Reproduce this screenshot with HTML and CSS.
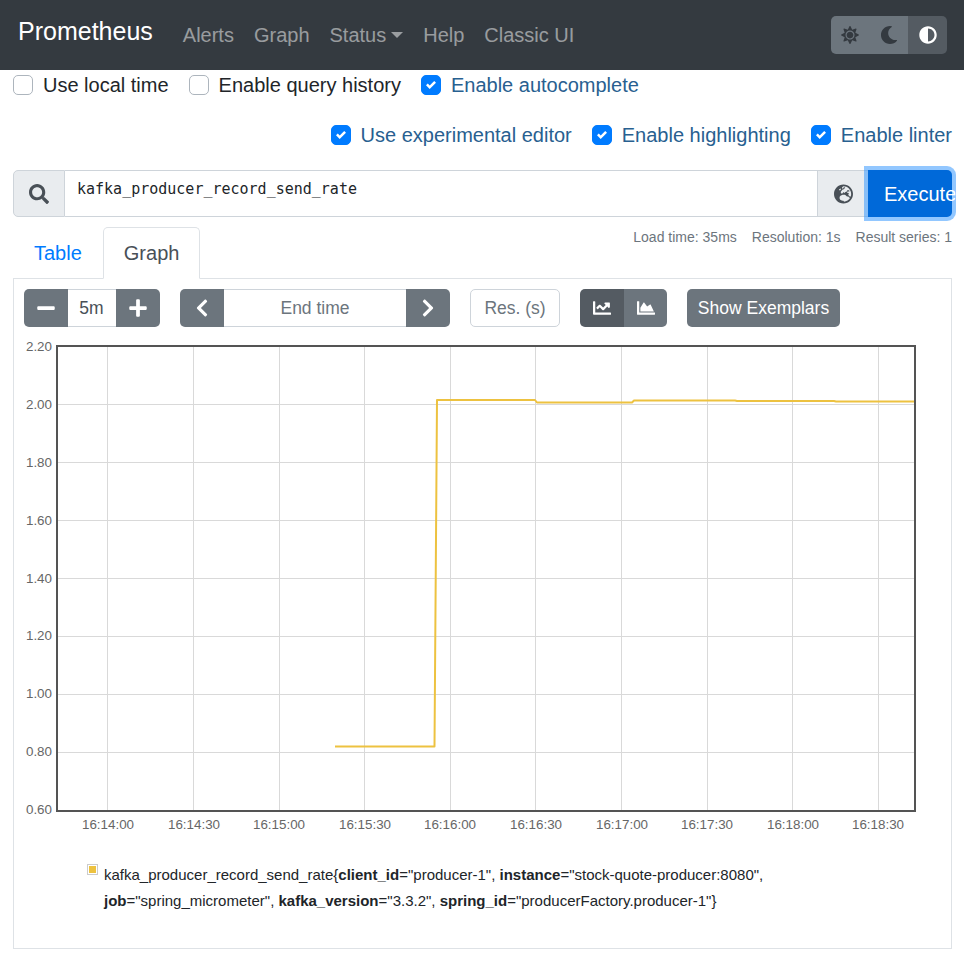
FILE: index.html
```html
<!DOCTYPE html>
<html lang="en">
<head>
<meta charset="utf-8">
<title>Prometheus Time Series Collection and Processing Server</title>
<link rel="stylesheet" href="styles.css">
</head>
<body>
<nav class="navbar">
  <a class="brand">Prometheus</a>
  <ul class="nav-links">
    <li class="nav-link">Alerts</li>
    <li class="nav-link">Graph</li>
    <li class="nav-link">Status<span class="caret"></span></li>
    <li class="nav-link">Help</li>
    <li class="nav-link">Classic UI</li>
  </ul>
  <div class="theme-group">
    <button class="theme-btn"><svg class="icon-theme" viewBox="0 0 512 512"><path d="M256 160c-52.9 0-96 43.1-96 96s43.1 96 96 96 96-43.1 96-96-43.1-96-96-96zm246.4 80.5l-94.7-47.3 33.5-100.4c4.5-13.6-8.4-26.5-21.9-21.9l-100.4 33.5-47.4-94.8c-6.4-12.8-24.6-12.8-31 0l-47.3 94.7L92.7 70.8c-13.6-4.5-26.5 8.4-21.9 21.9l33.5 100.4-94.7 47.4c-12.8 6.4-12.8 24.6 0 31l94.7 47.3-33.5 100.5c-4.5 13.6 8.4 26.5 21.9 21.9l100.4-33.5 47.3 94.7c6.4 12.8 24.6 12.8 31 0l47.3-94.7 100.4 33.5c13.6 4.5 26.5-8.4 21.9-21.9l-33.5-100.4 94.7-47.3c13-6.5 13-24.7.2-31.1zm-155.9 106c-49.9 49.9-131.1 49.9-181 0-49.9-49.9-49.9-131.1 0-181 49.9-49.9 131.1-49.9 181 0 49.9 49.9 49.9 131.1 0 181z"/></svg></button>
    <button class="theme-btn"><svg class="icon-theme" viewBox="0 0 512 512"><path d="M283.211 512c78.962 0 151.079-35.925 198.857-94.792 7.068-8.708-.639-21.43-11.562-19.35-124.203 23.654-238.262-71.576-238.262-196.954 0-72.222 38.662-138.635 101.498-174.394 9.686-5.512 7.25-20.197-3.756-22.23A258.156 258.156 0 0 0 283.211 0c-141.309 0-256 114.511-256 256 0 141.309 114.511 256 256 256z"/></svg></button>
    <button class="theme-btn theme-active"><svg class="icon-theme" viewBox="0 0 512 512"><path d="M8 256c0 136.966 111.033 248 248 248s248-111.034 248-248S392.966 8 256 8 8 119.033 8 256zm248 184V72c101.705 0 184 82.311 184 184 0 101.705-82.311 184-184 184z"/></svg></button>
  </div>
</nav>

<main class="container">
  <div class="options-row">
    <label class="check"><span class="box"></span>Use local time</label>
    <label class="check"><span class="box"></span>Enable query history</label>
    <label class="check checked"><span class="box"><svg viewBox="0 0 8 8"><path d="M6.564.75l-3.59 3.612-1.538-1.55L0 4.26l2.974 2.99L8 2.193z"/></svg></span>Enable autocomplete</label>
  </div>
  <div class="options-row options-right">
    <label class="check checked"><span class="box"><svg viewBox="0 0 8 8"><path d="M6.564.75l-3.59 3.612-1.538-1.55L0 4.26l2.974 2.99L8 2.193z"/></svg></span>Use experimental editor</label>
    <label class="check checked"><span class="box"><svg viewBox="0 0 8 8"><path d="M6.564.75l-3.59 3.612-1.538-1.55L0 4.26l2.974 2.99L8 2.193z"/></svg></span>Enable highlighting</label>
    <label class="check checked"><span class="box"><svg viewBox="0 0 8 8"><path d="M6.564.75l-3.59 3.612-1.538-1.55L0 4.26l2.974 2.99L8 2.193z"/></svg></span>Enable linter</label>
  </div>

  <div class="query">
    <div class="query-addon query-search"><svg class="icon-search" viewBox="0 0 512 512"><path d="M505 442.7L405.3 343c-4.5-4.5-10.6-7-17-7H372c27.6-35.3 44-79.7 44-128C416 93.1 322.9 0 208 0S0 93.1 0 208s93.1 208 208 208c48.3 0 92.7-16.4 128-44v16.3c0 6.4 2.5 12.5 7 17l99.7 99.7c9.4 9.4 24.6 9.4 33.9 0l28.3-28.3c9.4-9.4 9.4-24.6.1-34zM208 336c-70.7 0-128-57.2-128-128 0-70.7 57.2-128 128-128 70.7 0 128 57.2 128 128 0 70.7-57.2 128-128 128z"/></svg></div>
    <div class="query-input">kafka_producer_record_send_rate</div>
    <div class="query-addon query-globe"><svg class="icon-globe" viewBox="0 0 496 512"><path d="M248 8C111 8 0 119 0 256s111 248 248 248 248-111 248-248S385 8 248 8zm200 248c0 22.5-3.9 44.2-10.8 64.4h-20.3c-4.3 0-8.4-1.7-11.4-4.8l-32-32.6c-4.5-4.6-4.5-12.1.1-16.7l12.5-12.5v-8.7c0-3-1.2-5.9-3.3-8l-9.4-9.4c-2.1-2.1-5-3.3-8-3.3h-16c-6.2 0-11.3-5.1-11.3-11.3 0-3 1.2-5.9 3.3-8l9.4-9.4c2.1-2.1 5-3.3 8-3.3h32c6.2 0 11.3-5.1 11.3-11.3v-9.4c0-6.2-5.1-11.3-11.3-11.3h-36.7c-8.8 0-16 7.2-16 16v4.5c0 6.9-4.4 13-10.9 15.2l-31.6 10.5c-3.3 1.1-5.5 4.1-5.5 7.6v2.2c0 4.4-3.6 8-8 8h-16c-4.4 0-8-3.6-8-8s-3.6-8-8-8H247c-3 0-5.8 1.7-7.2 4.4l-9.4 18.7c-2.7 5.4-8.2 8.8-14.3 8.8H194c-8.8 0-16-7.2-16-16V199c0-4.2 1.7-8.3 4.7-11.3l20.1-20.1c4.6-4.6 7.2-10.9 7.2-17.5 0-3.4 2.2-6.5 5.5-7.6l40-13.3c1.7-.6 3.2-1.5 4.4-2.7l26.8-26.8c2.1-2.1 3.3-5 3.3-8 0-6.2-5.1-11.3-11.3-11.3H258l-16 16v8c0 4.4-3.6 8-8 8h-16c-4.4 0-8-3.6-8-8v-20c0-2.5 1.2-4.9 3.2-6.4l28.9-21.7c1.9-.1 3.8-.3 5.7-.3C358.3 56 448 145.7 448 256zM130.1 149.1c0-3 1.2-5.9 3.3-8l25.4-25.4c2.1-2.1 5-3.3 8-3.3 6.2 0 11.3 5.1 11.3 11.3v16c0 3-1.2 5.9-3.3 8l-9.4 9.4c-2.1 2.1-5 3.3-8 3.3h-16c-6.2 0-11.3-5.1-11.3-11.3zm128 306.4v-7.1c0-8.8-7.2-16-16-16h-20.2c-10.8 0-26.7-5.3-35.4-11.8l-22.2-16.7c-11.5-8.6-18.2-22.1-18.2-36.4v-23.9c0-16 8.4-30.8 22.1-39l42.9-25.7c7.1-4.2 15.2-6.5 23.4-6.5h31.2c10.9 0 21.4 3.9 29.6 10.9l43.2 37.1h18.3c8.5 0 16.6 3.4 22.6 9.4l17.3 17.3c3.4 3.4 8.1 5.3 12.9 5.3H423c-32.4 58.9-93.8 99.5-164.9 103.1z"/></svg></div>
    <button class="execute">Execute</button>
  </div>

  <div class="tab-row">
    <div class="tabs">
      <a class="tab">Table</a>
      <a class="tab tab-active">Graph</a>
    </div>
    <div class="stats">
      <span>Load time: 35ms</span>
      <span>Resolution: 1s</span>
      <span>Result series: 1</span>
    </div>
  </div>

  <section class="panel">
    <div class="controls">
      <div class="group">
        <button class="btn"><svg class="icon-btn" viewBox="0 0 448 512"><path d="M416 208H32c-17.67 0-32 14.33-32 32v32c0 17.67 14.33 32 32 32h384c17.67 0 32-14.33 32-32v-32c0-17.67-14.33-32-32-32z"/></svg></button>
        <div class="field range-field">5m</div>
        <button class="btn"><svg class="icon-btn" viewBox="0 0 448 512"><path d="M416 208H272V64c0-17.67-14.33-32-32-32h-32c-17.67 0-32 14.33-32 32v144H32c-17.67 0-32 14.33-32 32v32c0 17.67 14.33 32 32 32h144v144c0 17.67 14.33 32 32 32h32c17.67 0 32-14.33 32-32V304h144c17.67 0 32-14.33 32-32v-32c0-17.67-14.33-32-32-32z"/></svg></button>
      </div>
      <div class="group">
        <button class="btn"><svg class="icon-btn" viewBox="0 0 320 512"><path d="M34.52 239.03L228.87 44.69c9.37-9.37 24.57-9.37 33.94 0l22.67 22.67c9.36 9.36 9.37 24.52.04 33.9L131.49 256l154.02 154.75c9.34 9.38 9.32 24.54-.04 33.9l-22.67 22.67c-9.37 9.37-24.57 9.37-33.94 0L34.52 272.97c-9.37-9.37-9.37-24.57 0-33.94z"/></svg></button>
        <div class="field time-field">End time</div>
        <button class="btn"><svg class="icon-btn" viewBox="0 0 320 512"><path d="M285.476 272.971L91.132 467.314c-9.373 9.373-24.569 9.373-33.941 0l-22.667-22.667c-9.357-9.357-9.375-24.522-.04-33.901L188.505 256 34.484 101.255c-9.335-9.379-9.317-24.544.04-33.901l22.667-22.667c9.373-9.373 24.569-9.373 33.941 0L285.475 239.03c9.373 9.372 9.373 24.568.001 33.941z"/></svg></button>
      </div>
      <div class="field res-field">Res. (s)</div>
      <div class="group">
        <button class="btn btn-active"><svg class="icon-chart" viewBox="0 0 512 512"><path d="M496 384H64V80c0-8.84-7.16-16-16-16H16C7.16 64 0 71.16 0 80v336c0 17.67 14.33 32 32 32h464c8.84 0 16-7.16 16-16v-32c0-8.84-7.16-16-16-16zM464 96H345.94c-21.38 0-32.09 25.85-16.97 40.97l32.4 32.4L288 242.75l-73.37-73.37c-12.5-12.5-32.76-12.5-45.25 0l-68.69 68.69c-6.25 6.25-6.25 16.38 0 22.63l22.62 22.62c6.25 6.25 16.38 6.25 22.63 0L192 237.25l73.37 73.37c12.5 12.5 32.76 12.5 45.25 0l96-96 32.4 32.4c15.12 15.12 40.97 4.41 40.97-16.97V112c.01-8.84-7.15-16-15.99-16z"/></svg></button>
        <button class="btn btn-second"><svg class="icon-chart" viewBox="0 0 512 512"><path d="M500 384c6.6 0 12 5.4 12 12v40c0 6.6-5.4 12-12 12H12c-6.6 0-12-5.4-12-12V76c0-6.6 5.4-12 12-12h40c6.6 0 12 5.4 12 12v308h436zM372.7 159.5L288 216l-85.3-113.7c-5.1-6.8-15.5-6.3-19.9 1L96 248v104h384l-89.9-187.8c-3.2-6.5-11.4-8.7-17.4-4.7z"/></svg></button>
      </div>
      <button class="btn btn-text">Show Exemplars</button>
    </div>

    <svg class="chart" viewBox="14 335 937 515" width="937" height="515">
      <g class="grid">
        <path d="M107.5 346V811M193.5 346V811M279.5 346V811M364.5 346V811M450.5 346V811M535.5 346V811M621.5 346V811M707.5 346V811M792.5 346V811M878.5 346V811"/>
        <path d="M57 404.5H915M57 462.5H915M57 520.5H915M57 578.5H915M57 636.5H915M57 694.5H915M57 752.5H915"/>
      </g>
      <polyline class="series" points="335,746.5 434.5,746.5 437,400 535,400 537,402.5 632,402.5 634,400.5 735,400.5 737,401 834,401 836,401.5 915,401.5"/>
      <rect class="frame" x="57" y="346" width="858" height="465"/>
      <g class="ticks ticks-y">
        <text x="52" y="351">2.20</text>
        <text x="52" y="409">2.00</text>
        <text x="52" y="467">1.80</text>
        <text x="52" y="525">1.60</text>
        <text x="52" y="583">1.40</text>
        <text x="52" y="640">1.20</text>
        <text x="52" y="698">1.00</text>
        <text x="52" y="756">0.80</text>
        <text x="52" y="814">0.60</text>
      </g>
      <g class="ticks ticks-x">
        <text x="108" y="829">16:14:00</text>
        <text x="194" y="829">16:14:30</text>
        <text x="279" y="829">16:15:00</text>
        <text x="365" y="829">16:15:30</text>
        <text x="450" y="829">16:16:00</text>
        <text x="536" y="829">16:16:30</text>
        <text x="622" y="829">16:17:00</text>
        <text x="707" y="829">16:17:30</text>
        <text x="793" y="829">16:18:00</text>
        <text x="878" y="829">16:18:30</text>
      </g>
    </svg>

    <div class="legend">
      <span class="swatch"><span class="swatch-fill"></span></span>
      <span class="legend-text">kafka_producer_record_send_rate<span>{</span><b>client_id</b>=<span>"producer-1"</span>, <b>instance</b>=<span>"stock-quote-producer:8080"</span>, <b>job</b>=<span>"spring_micrometer"</span>, <b>kafka_version</b>=<span>"3.3.2"</span>, <b>spring_id</b>=<span>"producerFactory.producer-1"</span><span>}</span></span>
    </div>
  </section>
</main>
</body>
</html>
```

FILE: styles.css
```css
* { box-sizing: border-box; }
html, body { margin: 0; padding: 0; }
body {
  font-family: "Liberation Sans", Arial, sans-serif;
  font-size: 20px;
  line-height: 30px;
  color: #212529;
  background: #fff;
  overflow-x: hidden;
}
button { font: inherit; border: 0; padding: 0; margin: 0; }

.navbar {
  display: flex;
  align-items: center;
  height: 70px;
  padding: 0 17px 0 18px;
  background: #343a40;
}
.brand { color: #fff; font-size: 25px; line-height: 37px; margin-right: 20px; position: relative; top: -4px; }
.nav-links { display: flex; list-style: none; margin: 0; padding: 0; }
.nav-link { padding: 0 10px; color: rgba(255, 255, 255, .5); }
.caret {
  display: inline-block;
  margin-left: 5px;
  vertical-align: 4px;
  border-top: 6px solid;
  border-left: 6px solid transparent;
  border-right: 6px solid transparent;
}
.theme-group { display: flex; margin-left: auto; margin-top: -1px; height: 38px; border-radius: 5px; overflow: hidden; }
.theme-btn { width: 38.67px; background: #6c757d; color: #343a40; display: flex; align-items: center; justify-content: center; }
.theme-active { background: #545b62; color: #fff; }
.icon-theme { width: 18px; height: 18px; fill: currentColor; }

.container { padding: 0 12px 0 13px; }

.options-row { display: flex; gap: 20px; height: 30px; }
.options-right { justify-content: flex-end; margin-top: 20px; }
.check { display: flex; align-items: center; white-space: nowrap; }
.box {
  width: 20px;
  height: 20px;
  margin-right: 10px;
  background: #fff;
  border: 1px solid #adb5bd;
  border-radius: 5px;
  display: flex;
  align-items: center;
  justify-content: center;
}
.box svg { width: 10px; height: 10px; fill: #fff; }
.checked { color: #286090; }
.checked .box { background: #007bff; border-color: #007bff; }

.query { display: flex; height: 47px; margin-top: 20px; }
.query-addon {
  display: flex;
  align-items: center;
  justify-content: center;
  background: #e9ecef;
  border: 1px solid #ced4da;
  color: #495057;
}
.query-search { width: 52px; border-radius: 5px 0 0 5px; }
.query-globe { width: 51px; border-left-width: 1px; border-right: 0; }
.icon-search { width: 20px; height: 20px; fill: currentColor; }
.icon-globe { width: 19px; height: 20px; fill: currentColor; }
.query-input {
  flex: 1;
  min-width: 0;
  border-top: 1px solid #ced4da;
  border-bottom: 1px solid #ced4da;
  padding: 3px 0 0 12px;
  font: 15px/30px "DejaVu Sans Mono", monospace;
  color: #212529;
}
.execute {
  width: 84px;
  flex: none;
  padding-left: 16px;
  text-align: left;
  white-space: nowrap;
  color: #fff;
  background: #0069d9;
  border-radius: 0 5px 5px 0;
  box-shadow: 0 0 0 4px rgba(38, 143, 255, .5);
  overflow: clip;
  overflow-clip-margin: 3.5px;
}

.tab-row { display: flex; justify-content: space-between; margin-top: 10px; height: 51px; position: relative; z-index: 1; }
.tabs { display: flex; }
.tab { padding: 10px 20px; height: 52px; border: 1px solid transparent; color: #007bff; border-radius: 5px 5px 0 0; }
.tab-active { color: #495057; background: #fff; border-color: #dee2e6 #dee2e6 #fff; }
.stats { display: flex; gap: 15px; font-size: 14px; line-height: 20px; color: #6c757d; }

.panel { border: 1px solid #dee2e6; height: 671px; padding: 10px 0 0; }
.controls { display: flex; gap: 20px; padding: 0 10px; font-size: 17.5px; line-height: 26px; }
.group { display: flex; height: 38px; }
.btn {
  width: 44px;
  height: 38px;
  flex: none;
  display: flex;
  align-items: center;
  justify-content: center;
  background: #6c757d;
  color: #fff;
}
.group .btn:first-child { border-radius: 5px 0 0 5px; }
.group .btn:last-child { border-radius: 0 5px 5px 0; }
.btn-second { width: 43px; }
.btn-active { background: #545b62; }
.btn-text { width: 153px; border-radius: 5px; }
.icon-btn { height: 20px; width: 18px; fill: currentColor; }
.icon-chart { width: 18px; height: 18px; fill: currentColor; }
.field {
  height: 38px;
  display: flex;
  align-items: center;
  justify-content: center;
  background: #fff;
  border: 1px solid #ced4da;
  border-width: 1px 0;
  color: #6c757d;
}
.range-field { width: 48px; padding-right: 1px; color: #495057; }
.time-field { width: 182px; }
.res-field { width: 90px; border-width: 1px; border-radius: 5px; }

.chart { display: block; margin-top: 8px; }
.grid path { fill: none; stroke: #d9d9d9; stroke-width: 1; }
.series { fill: none; stroke: #edc240; stroke-width: 2; stroke-linejoin: round; }
.frame { fill: none; stroke: #545454; stroke-width: 2; }
.ticks text { font-family: "Liberation Sans", Arial, sans-serif; font-size: 13.4px; fill: #666; }
.ticks-y text { text-anchor: end; }
.ticks-x text { text-anchor: middle; }

.legend { position: relative; margin: 12px 0 0 73px; width: 700px; padding-left: 17px; font-size: 15px; line-height: 26px; }
.swatch {
  position: absolute;
  left: 0;
  top: 2px;
  width: 11px;
  height: 11px;
  border: 1px solid #ccc;
  padding: 1px;
  display: block;
}
.swatch-fill { display: block; width: 7px; height: 7px; background: #edc240; }
.legend-text { display: block; }
```
